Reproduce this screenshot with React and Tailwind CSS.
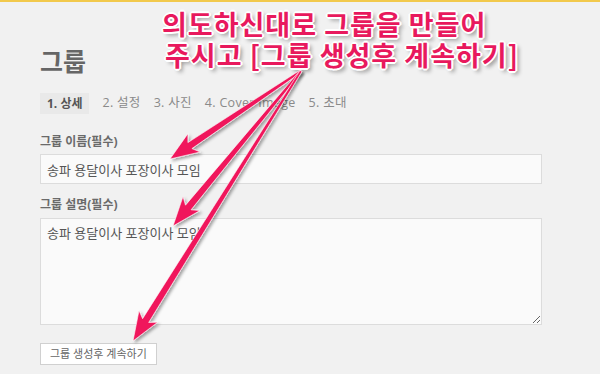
import React from 'react';

const ORIGIN = { x: 301, y: 69 };

// tips of the three annotation arrows
const arrowTips = [
  { x: 170, y: 157 },
  { x: 173, y: 224 },
  { x: 133, y: 339 },
];

function arrowPoints(x1, y1, x2, y2) {
  const dx = x2 - x1;
  const dy = y2 - y1;
  const len = Math.hypot(dx, dy);
  const ux = dx / len;
  const uy = dy / len;
  const nx = -uy;
  const ny = ux;
  const head = 24;
  const barb = 11;
  const shaftEnd = 3.6;
  const shaftStart = 1.2;
  const bx = x2 - ux * head;
  const by = y2 - uy * head;
  // barbs sit a little behind the head base
  const kx = x2 - ux * (head + 5);
  const ky = y2 - uy * (head + 5);
  const pts = [
    [x1 + nx * shaftStart, y1 + ny * shaftStart],
    [bx + nx * shaftEnd, by + ny * shaftEnd],
    [kx + nx * barb, ky + ny * barb],
    [x2, y2],
    [kx - nx * barb, ky - ny * barb],
    [bx - nx * shaftEnd, by - ny * shaftEnd],
    [x1 - nx * shaftStart, y1 - ny * shaftStart],
  ];
  return pts.map(p => p[0].toFixed(1) + ',' + p[1].toFixed(1)).join(' ');
}

function Tabs() {
  const tabs = ['2. 설정', '3. 사진', '4. Cover Image', '5. 초대'];
  return (
    <div className="flex items-center gap-[13px] mt-[16px] text-[12.5px]">
      <div className="bg-[#e9e9e9] px-[7px] h-[21px] flex items-center font-bold text-[#555] text-[12px]">1. 상세</div>
      {tabs.map(t => (
        <div key={t} className="h-[21px] flex items-center text-[#8a8a8a] tracking-[0.3px]">{t}</div>
      ))}
    </div>
  );
}

export default function App() {
  const outline =
    '[text-shadow:1px_1px_0_#fff,-1px_-1px_0_#fff,1px_-1px_0_#fff,-1px_1px_0_#fff,2px_0_0_#fff,-2px_0_0_#fff,0_2px_0_#fff,0_-2px_0_#fff,3px_3px_4px_rgba(0,0,0,0.45)]';

  return (
    <div
      className="relative w-[600px] h-[374px] overflow-hidden bg-[#f1f1f1] border-t-[2px] border-[#f2c94c]"
      style={{ fontFamily: '"Open Sans", "Noto Sans CJK KR", sans-serif' }}
    >
      <main className="pl-[40px] pr-[58px] pt-[43px]">
        <h1 className="text-[25px] font-bold text-[#666] leading-[32px]">그룹</h1>

        <Tabs />

        <form className="mt-[19px]" onSubmit={e => e.preventDefault()}>
          <label className="block text-[12px] font-bold text-[#6a6a6a] leading-[18px]">그룹 이름(필수)</label>
          <input
            className="mt-[3px] block w-full h-[30px] bg-[#fafafa] border border-[#dcdcdc] px-[6px] text-[13px] text-[#555] outline-none"
            defaultValue="송파 용달이사 포장이사 모임"
          />

          <label className="block mt-[12px] text-[12px] font-bold text-[#6a6a6a] leading-[18px]">그룹 설명(필수)</label>
          <textarea
            className="mt-[4px] block w-full h-[107px] bg-[#fafafa] border border-[#dcdcdc] px-[6px] py-[5px] text-[13px] text-[#555] outline-none"
            defaultValue="송파 용달이사 포장이사 모임"
          />

          <button
            type="submit"
            className="mt-[18px] h-[22px] px-[9px] bg-white border border-[#d0d0d0] text-[11px] text-[#666]"
          >
            그룹 생성후 계속하기
          </button>
        </form>
      </main>

      {/* annotation overlay */}
      <div
        className={'absolute left-[162px] top-[6px] text-[27px] font-bold leading-[31px] tracking-[1px] text-[#e8195d] ' + outline}
        style={{ fontFamily: '"Noto Sans CJK KR", sans-serif' }}
      >
        <div>의도하신대로 그룹을 만들어</div>
        <div className="pl-[3px]">주시고 [그룹 생성후 계속하기]</div>
      </div>

      <svg className="absolute left-0 top-0 pointer-events-none" width="600" height="374">
        <defs>
          <filter id="shadow" x="-20%" y="-20%" width="140%" height="140%">
            <feDropShadow dx="2" dy="2" stdDeviation="1.5" floodColor="#000" floodOpacity="0.35" />
          </filter>
        </defs>
        {arrowTips.map((t, i) => (
          <polygon
            key={i}
            points={arrowPoints(ORIGIN.x, ORIGIN.y, t.x, t.y)}
            fill="#f0185c"
            stroke="#fff"
            strokeWidth="0.6"
            filter="url(#shadow)"
          />
        ))}
      </svg>
    </div>
  );
}
